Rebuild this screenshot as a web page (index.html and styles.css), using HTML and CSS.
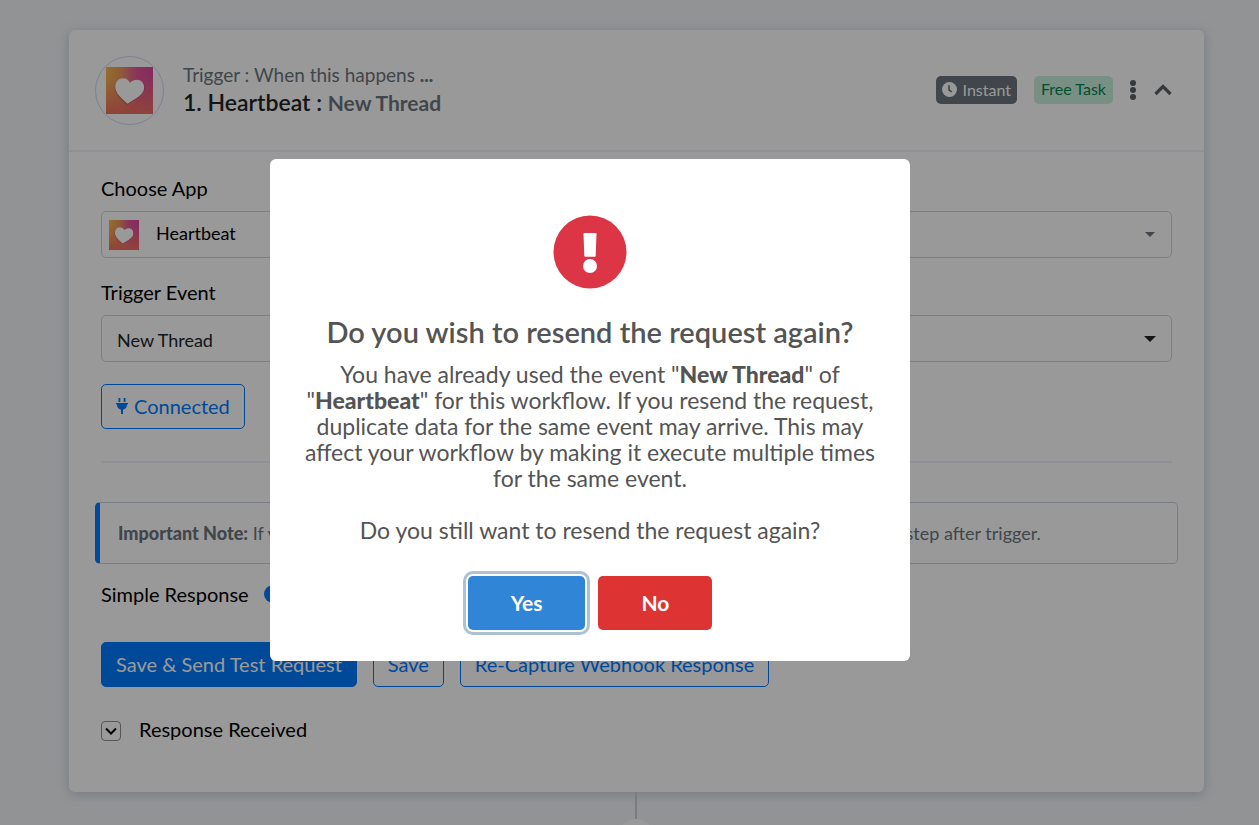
FILE: index.html
```html
<!DOCTYPE html>
<html lang="en">
<head>
  <meta charset="UTF-8" />
  <meta name="viewport" content="width=device-width, initial-scale=1.0" />
  <title>Heartbeat : New Thread</title>
  <link rel="stylesheet" href="styles.css">
</head>
<body>
  <!-- app logo, used in the header and in the app picker -->
  <svg class="defs" width="0" height="0" aria-hidden="true">
    <defs>
      <linearGradient id="hb-top" x1="0" y1="0" x2="1" y2="0">
        <stop offset="0" stop-color="#f5b74c" />
        <stop offset="0.3" stop-color="#ee9a58" />
        <stop offset="0.65" stop-color="#e5579a" />
        <stop offset="1" stop-color="#e0489c" />
      </linearGradient>
      <linearGradient id="hb-fade" x1="0" y1="0" x2="0" y2="1">
        <stop offset="0.2" stop-color="#f0705f" stop-opacity="0" />
        <stop offset="1" stop-color="#f0705f" />
      </linearGradient>
      <symbol id="heartbeat" viewBox="0 0 48 48">
        <rect width="48" height="48" fill="url(#hb-top)" />
        <rect width="48" height="48" fill="url(#hb-fade)" />
        <path d="M22 39C16 34 9 29 9 21c0-5 4-9 9-9 3 0 5 1 7 4 2-2 5-3 7-3 4 0 8 4 8 8 0 7-9 12-18 18z" fill="#000" opacity="0.15" />
        <path d="M22 37.500C16 32 9.500 27.500 9.500 20c0-5 3.500-8.500 8-8.500 3 0 5.500 1.500 7 4.500 2-2 4.500-3 7-3 4.500 0 7.500 3.500 7.500 8 0 7-8 11-17 16.500z" fill="#fff" />
      </symbol>
    </defs>
  </svg>

  <main class="card">
    <header class="card-header">
      <span class="app-logo"><svg width="47" height="47"><use href="#heartbeat" /></svg></span>
      <div class="card-title">
        <p>Trigger : When this happens <b>...</b></p>
        <h1>1. Heartbeat : <span>New Thread</span></h1>
      </div>
      <div class="card-tools">
        <span class="badge badge-instant">
          <svg width="15" height="15" viewBox="0 0 16 16"><circle cx="8" cy="8" r="8" fill="#fff" /><path d="M7.500 3.500v5l3 2" fill="none" stroke="#6c757d" stroke-width="1.800" /></svg>
          Instant
        </span>
        <span class="badge badge-free">Free Task</span>
        <button class="icon-btn menu-btn" aria-label="More options">
          <svg width="6" height="20" viewBox="0 0 6 20" fill="#5a6169"><circle cx="3" cy="3" r="3" /><circle cx="3" cy="10" r="3" /><circle cx="3" cy="17" r="3" /></svg>
        </button>
        <button class="icon-btn" aria-label="Collapse">
          <svg width="18" height="12" viewBox="0 0 18 12" fill="none" stroke="#5a6169" stroke-width="3.200"><path d="M1.500 10L9 2.500l7.500 7.500" /></svg>
        </button>
      </div>
    </header>

    <div class="card-body">
      <label for="app">Choose App</label>
      <div class="picker picker-app">
        <svg class="picker-logo" width="30" height="30"><use href="#heartbeat" /></svg>
        <select id="app"><option>Heartbeat</option></select>
        <svg class="arrow" width="12" height="6" viewBox="0 0 12 6" fill="#6c757d"><path d="M1 0h10L6 5z" /></svg>
      </div>

      <label for="event">Trigger Event</label>
      <div class="picker">
        <select id="event"><option>New Thread</option></select>
        <svg class="arrow" width="12" height="6" viewBox="0 0 12 6" fill="#212529"><path d="M0 0h12L6 6z" /></svg>
      </div>

      <button class="btn btn-connected">
        <svg width="12" height="16" viewBox="0 0 12 16" fill="#007bff"><path d="M2.500 0h1.800v4H2.500zM7.700 0h1.800v4H7.700zM0 5h12v1.600h-1c0 3-1.500 4.700-4 5.200V16H5v-4.200C2.500 11.300 1 9.600 1 6.600H0z" /></svg>
        Connected
      </button>

      <hr>

      <div class="note"><strong>Important Note:</strong> If you have changed the data in the app, please resend the request before adding a step after trigger.</div>

      <div class="switch-row">
        <label for="simple">Simple Response</label>
        <input type="checkbox" id="simple" class="switch" checked>
      </div>

      <div class="actions">
        <button class="btn btn-primary">Save &amp; Send Test Request</button>
        <button class="btn">Save</button>
        <button class="btn">Re-Capture Webhook Response</button>
      </div>

      <div class="response">
        <button class="toggle" aria-label="Show response">
          <svg width="12" height="8" viewBox="0 0 12 8" fill="none" stroke="#000" stroke-width="2"><path d="M1 1.500l5 5 5-5" /></svg>
        </button>
        <span>Response Received</span>
      </div>
    </div>
  </main>

  <div class="connector"><span></span></div>

  <div class="overlay">
    <div class="modal" role="dialog" aria-modal="true" aria-labelledby="modal-title">
      <svg width="74" height="74" viewBox="0 0 74 74"><circle cx="37" cy="37" r="36.500" fill="#dc3545" /><path d="M31.500 18h11c.8 0 1 .4 1 1l-.8 21.500c0 .9-.5 1.300-1.200 1.300h-9c-.7 0-1.200-.4-1.200-1.300L30.500 19c0-.6.300-1 1-1z" fill="#fff" /><circle cx="37" cy="51" r="7" fill="#fff" /></svg>
      <h2 id="modal-title">Do you wish to resend the request again?</h2>
      <p>You have already used the event "<b>New Thread</b>" of<br>"<b>Heartbeat</b>" for this workflow. If you resend the request,<br>duplicate data for the same event may arrive. This may<br>affect your workflow by making it execute multiple times<br>for the same event.</p>
      <p>Do you still want to resend the request again?</p>
      <div class="modal-actions">
        <button class="yes">Yes</button>
        <button class="no">No</button>
      </div>
    </div>
  </div>
</body>
</html>
```
FILE: styles.css
```css
* { box-sizing: border-box; margin: 0; padding: 0; }
body {
  font-family: Lato, "Open Sans", sans-serif;
  font-size: 20px; line-height: 24px; color: #000;
  background-color: #f3f5f8;
  height: 100vh; overflow: hidden;
}
button, select { font-family: inherit; font-size: 20px; cursor: pointer; }
b, strong { font-weight: 900; }
svg { display: block; flex: none; }
.defs { position: absolute; }

/* card */
.card {
  margin: 30px 55px 0 69px;
  background: #fff; border-radius: 6px;
  box-shadow: 0 2px 12px rgba(100,130,150,0.35);
}
.card-header {
  display: flex; align-items: center;
  padding: 26px 32px 25px 26px;
  border-bottom: 2px solid #edf2f9;
}
.app-logo {
  width: 69px; height: 69px;
  display: flex; align-items: center; justify-content: center;
  border: 1px solid #cfd8f5; border-radius: 50%;
  margin-right: 19px; flex: none;
}
.card-title { flex: 1; margin-top: -3px; }
.card-title p { font-size: 19px; line-height: 26px; color: #6c757d; }
.card-title h1 { font-size: 23px; line-height: 28px; font-weight: 600; color: #212529; }
.card-title h1 span { font-size: 21px; font-weight: 700; color: #6c757d; }
.card-tools { display: flex; align-items: center; padding-bottom: 2px; }
.badge {
  display: flex; align-items: center; gap: 6px;
  height: 28px; padding: 0 7px; border-radius: 5px;
  font-size: 16px; white-space: nowrap;
}
.badge-instant { background: #6c757d; color: #fff; margin-right: 17px; padding: 0 6px; }
.badge-free { background: #c9f0dd; color: #00854a; margin-right: 17px; padding-bottom: 2px; }
.icon-btn { border: none; background: none; }
.menu-btn { margin-right: 18px; }

.card-body { padding: 24px 32px 51px; }
.card-body label { display: block; }

/* drop-downs */
.picker { position: relative; margin: 11px 0 22px; }
.picker select {
  display: block; width: 100%; height: 47px;
  padding: 2px 15px 0; font-size: 18px; color: #212529;
  background: #fff; border: 1px solid #ced4da; border-radius: 5px;
  appearance: none;
}
.picker-app select { padding: 0 54px 4px; color: #000; }
.picker-logo { position: absolute; left: 8px; top: 9px; }
.arrow { position: absolute; right: 16px; top: 21px; }

/* buttons */
.btn {
  display: flex; align-items: center; gap: 6px;
  height: 45px; padding: 0 14px 2px;
  color: #007bff; background: #fff;
  border: 1px solid #007bff; border-radius: 5px;
  white-space: nowrap;
}
.btn-primary { background: #007bff; color: #fff; }
hr { border: none; border-top: 2px solid #edf2f9; margin: 32px 0 39px; }

.note {
  margin: 0 -6px 18px; padding: 18px;
  border: 1px solid #c9d0e0; border-left: 5px solid #007bff;
  border-radius: 5px;
  font-size: 18px; color: #6c757d;
}
.switch-row { display: flex; align-items: center; gap: 15px; margin-bottom: 36px; }
.switch {
  appearance: none; width: 34px; height: 18px;
  border-radius: 9px; background: #007bff;
}
.actions { display: flex; gap: 16px; margin-bottom: 30px; }
.response { display: flex; align-items: flex-end; gap: 18px; }
.toggle {
  width: 20px; height: 20px;
  display: flex; align-items: center; justify-content: center;
  background: #fff; border: 1px solid #8b9096; border-radius: 4px;
}

/* line to the next step */
.connector {
  display: flex; flex-direction: column; align-items: center;
  margin: 0 56px 0 68px;
}
.connector::before { content: ""; width: 2px; height: 27px; background: #c9cfd8; }
.connector span { width: 36px; height: 36px; border-radius: 50%; background: #fff; }

/* confirm dialog */
.overlay {
  position: fixed; inset: 0;
  display: flex; align-items: center; justify-content: center;
  padding: 0 79px 5px 0;
  background: rgba(0,0,0,0.4);
}
.modal {
  width: 640px; max-width: 100%;
  display: flex; flex-direction: column; align-items: center;
  padding: 56px 20px 31px;
  background: #fff; border-radius: 6px;
  text-align: center; color: #545454;
}
.modal h2 { font-size: 29px; line-height: 36px; font-weight: 600; margin: 25px 0 11px; }
.modal p { font-size: 23px; line-height: 26px; margin-bottom: 26px; }
.modal-actions { display: flex; gap: 13px; margin-top: 7px; }
.modal-actions button {
  height: 54px; padding: 0 43px 2px;
  border: none; border-radius: 5px;
  color: #fff; font-size: 21px; font-weight: 700;
}
.yes { background: #3085d6; box-shadow: 0 0 0 2px #fff, 0 0 0 5px #acc0d6; }
.no { background: #dd3333; }
```
